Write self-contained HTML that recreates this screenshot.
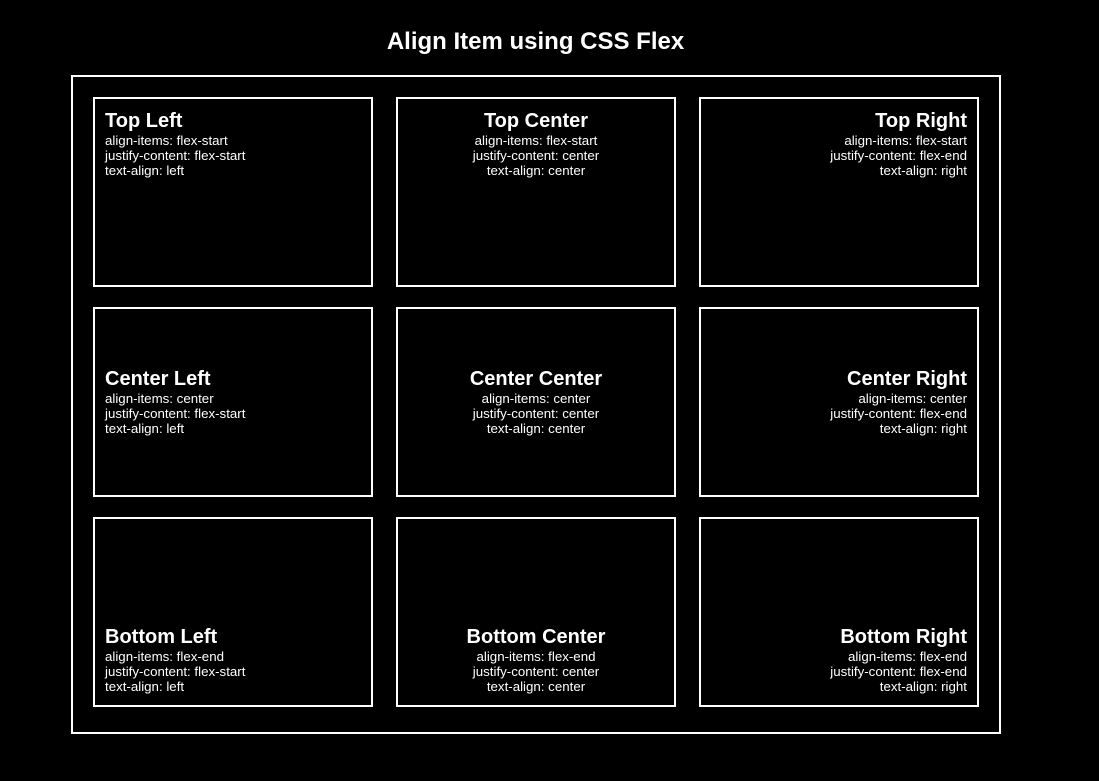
<!DOCTYPE html>
<html><head><style>
html,body{margin:0;padding:0;background:#000;}
body{width:1099px;height:781px;position:relative;font-family:"Liberation Sans",Arial,sans-serif;color:#fff;overflow:hidden;}
h1{position:absolute;left:0;width:1071px;top:28px;margin:0;text-align:center;font-size:24px;line-height:28px;font-weight:bold;}
.outer{position:absolute;left:71px;top:75px;width:926px;height:655px;border:2px solid #fff;}
.cell{position:absolute;width:256px;height:164px;border:2px solid #fff;padding:11px 10px 11px;display:flex;flex-direction:column;}
.cell h2{margin:0;font-size:20px;line-height:23px;font-weight:bold;}
.cell p{margin:0;font-size:13.3px;line-height:15px;}
.l{text-align:left}.c{text-align:center}.r{text-align:right}
.t{justify-content:flex-start}.m{justify-content:center}.b{justify-content:flex-end}
</style></head><body>
<h1>Align Item using CSS Flex</h1>
<div class="outer"></div>
<div class="cell t l" style="left:93px;top:97px"><h2>Top Left</h2><p>align-items: flex-start<br>justify-content: flex-start<br>text-align: left</p></div>
<div class="cell t c" style="left:396px;top:97px"><h2>Top Center</h2><p>align-items: flex-start<br>justify-content: center<br>text-align: center</p></div>
<div class="cell t r" style="left:699px;top:97px"><h2>Top Right</h2><p>align-items: flex-start<br>justify-content: flex-end<br>text-align: right</p></div>
<div class="cell m l" style="left:93px;top:307px"><h2>Center Left</h2><p>align-items: center<br>justify-content: flex-start<br>text-align: left</p></div>
<div class="cell m c" style="left:396px;top:307px"><h2>Center Center</h2><p>align-items: center<br>justify-content: center<br>text-align: center</p></div>
<div class="cell m r" style="left:699px;top:307px"><h2>Center Right</h2><p>align-items: center<br>justify-content: flex-end<br>text-align: right</p></div>
<div class="cell b l" style="left:93px;top:517px"><h2>Bottom Left</h2><p>align-items: flex-end<br>justify-content: flex-start<br>text-align: left</p></div>
<div class="cell b c" style="left:396px;top:517px"><h2>Bottom Center</h2><p>align-items: flex-end<br>justify-content: center<br>text-align: center</p></div>
<div class="cell b r" style="left:699px;top:517px"><h2>Bottom Right</h2><p>align-items: flex-end<br>justify-content: flex-end<br>text-align: right</p></div>
</body></html>
